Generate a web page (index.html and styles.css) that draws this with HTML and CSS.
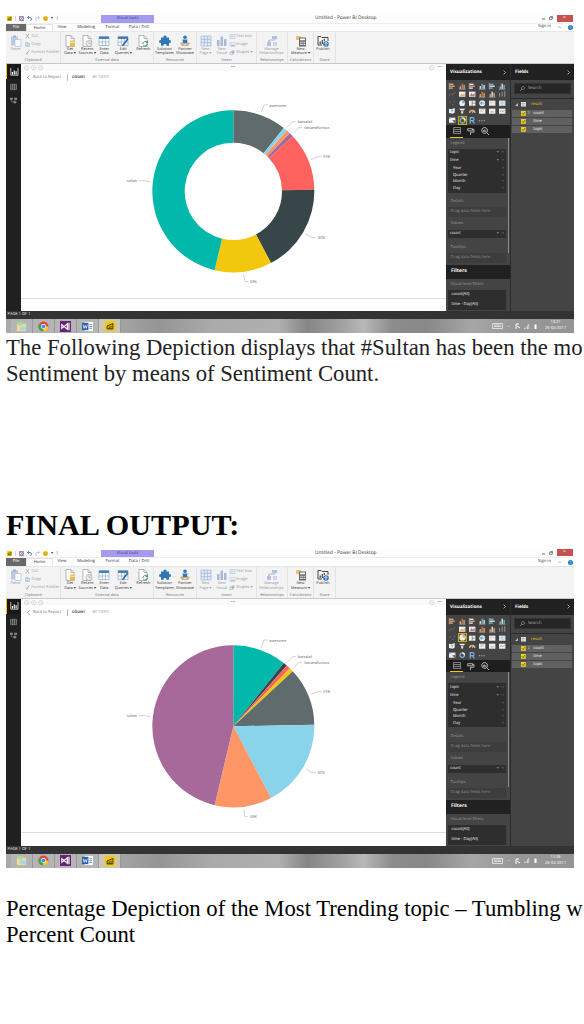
FILE: index.html
```html
<!DOCTYPE html>
<html lang="en">
<head>
<meta charset="utf-8">
<title>Sentiment report</title>
<link rel="stylesheet" href="styles.css">
</head>
<body>
<main class="doc">
  <section class="window" data-chart="donut" data-clock="13:21"></section>
  <p class="para para-first">The Following Depiction displays that #Sultan has been the mo<br>Sentiment by means of Sentiment Count.</p>
  <h1 class="heading">FINAL OUTPUT:</h1>
  <section class="window" data-chart="pie" data-clock="11:26"></section>
  <p class="para para-last">Percentage Depiction of the Most Trending topic – Tumbling w<br>Percent Count</p>
</main>
<script src="app.js"></script>
</body>
</html>
```
FILE: styles.css
```css
* { box-sizing: border-box; }
body { margin: 0; background: #fff; width: 584px; height: 1024px; overflow: hidden; }
.doc { padding: 14px 0 0 6px; width: 584px; height: 1024px; overflow: hidden; }
svg { display: block; flex: none; overflow: visible; }

.para { margin: 0; font: 22.7px/26.4px "Liberation Serif", serif; white-space: nowrap; color: #000; }
.para-first { margin-top: 1.5px; height: 52.8px; color: #222; }
.heading { margin: 117px 0 0; height: 44.7px; font: bold 30.2px/42px "Liberation Serif", serif; white-space: nowrap; color: #000; }
.para-last { margin-top: 28px; }

.window { width: 568px; height: 319px; display: flex; flex-direction: column; font: 4.1px/5px "Open Sans", sans-serif; color: #444; text-rendering: geometricPrecision; overflow: hidden; white-space: nowrap; }

.titlebar { height: 8.5px; display: grid; grid-template-columns: 95px 53px 161px 1fr auto; align-items: center; background: #fdfdfd; flex: none; }
.quick { display: flex; gap: 3px; align-items: center; padding-left: 1px; }
.tools { background: #a49bee; height: 7.5px; margin-top: 1px; line-height: 7px; text-align: center; color: #3d3880; }
.title { grid-column: 4; font-size: 4.8px; color: #333; }
.winbtns { display: flex; align-items: center; gap: 4.5px; height: 8px; align-self: start; }
.close { width: 16px; height: 7px; background: #c75050; color: #fff; text-align: center; font-size: 5px; line-height: 6px; margin-right: 1.5px; margin-left: -1px; }

.tabs { height: 8.5px; display: flex; align-items: stretch; flex: none; line-height: 8.5px; color: #333; background: #fff; border-top: .5px solid #eee; }
.tab { text-align: center; }
.tab-file { width: 20px; background: #686868; color: #fff; }
.tab-home { width: 27px; border: 1px solid #e4e4e4; border-bottom: 0; line-height: 7px; }
.tab-view { width: 18px; }
.tab-model { width: 30px; }
.tab-format { width: 23px; }
.tab-drill { width: 30px; }
.account { margin-left: auto; display: flex; gap: 7px; align-items: center; padding-right: 1px; font-size: 4.2px; }

.ribbon { height: 33px; background: #f3f3f3; border-top: 1px solid #e6e6e6; border-bottom: 1px solid #c9c9c9; display: flex; flex: none; }
.group { display: flex; flex-direction: column; border-right: 1px solid #e4e4e4; flex: none; }
.group-items { display: flex; height: 26px; padding-top: 2.5px; }
.group-name { text-align: center; font-size: 3.8px; color: #777; }
.cmd { display: flex; flex-direction: column; align-items: center; text-align: center; font-size: 3.9px; line-height: 4.7px; color: #333; flex: none; }
.cmd svg { margin-bottom: 1px; }
.cmd span { white-space: pre; }
.off { color: #999; }
.off svg { opacity: .65; }
.stack { display: flex; flex-direction: column; gap: 3px; font-size: 4px; color: #999; }
.stack div { display: flex; gap: 1.5px; align-items: center; height: 4.8px; }
.stack svg { opacity: .65; }

.work { display: flex; height: 247px; flex: none; }
.rail { width: 15px; background: #202020; display: flex; flex-direction: column; align-items: center; gap: 7px; }
.rail-on { width: 15px; height: 15px; border-left: 1px solid #f2c80f; display: grid; place-items: center; background: #181818; margin-bottom: -2px; }
.canvas { width: 425px; background: #fff; display: flex; flex-direction: column; }
.strip { height: 6.5px; display: flex; align-items: center; background: #fafafa; padding-left: 3px; gap: 1.5px; color: #888; flex: none; }
.strip-dots { margin-left: 186px; }
.strip-end { margin-left: auto; margin-right: 4px; display: flex; gap: 3px; align-items: center; }
.back { height: 14.5px; display: flex; align-items: center; padding-left: 6px; color: #777; flex: none; }
.back svg { margin-right: 3px; }
.back b { border-left: 1px solid #bbb; padding: 1px 7px 1px 4.5px; margin-left: 5.5px; color: #444; font-size: 3.7px; }
.back i { font-style: normal; font-size: 4px; color: #999; }
.chart { margin: 10px 0 0 99px; }
.chart text { font-size: 11.5px; fill: #666; }
.page-end { margin-top: 2.5px; border-top: 1px solid #ddd; }

.pane { background: #444; color: #ddd; display: flex; flex-direction: column; }
.viz { width: 65px; border-right: 1px solid #2c2c2c; position: relative; }
.fields { width: 63px; }
.pane-head { height: 16px; background: #212121; color: #fff; font-weight: bold; font-size: 4.6px; line-height: 16px; padding: 0 4px; display: flex; justify-content: space-between; align-items: center; flex: none; }
.gallery { height: 45px; display: grid; grid-template-columns: repeat(6, 10px); grid-auto-rows: 8.6px; place-items: center; padding: 1.5px 0 0 1.5px; flex: none; }
.pick { outline: 1px solid #c8ab18; background: #5a5424; }
.modes { height: 12.5px; background: #1e1e1e; display: flex; align-items: center; gap: 6px; padding-left: 4px; flex: none; }
.modes div { height: 12.5px; width: 8.5px; display: grid; place-items: center; }
.modes .mode-on { width: 13px; border-bottom: 1.5px solid #f2c80f; margin-right: -3px; }
.label { height: 11px; line-height: 11px; padding-left: 4.5px; color: #999; flex: none; }
.well { margin: 0 4px 0 2px; background: #2e2e2e; color: #f2f2f2; flex: none; font-size: 4px; }
.well div { display: flex; justify-content: space-between; padding: 0 2px 0 2px; height: 6.75px; line-height: 6.75px; }
.well .well-top { height: 8.4px; line-height: 8.4px; }
.well .sub { padding-left: 5px; }
.well em { font-style: normal; color: #888; word-spacing: 2px; }
.well-main { height: 44px; padding-top: .5px; margin-bottom: 3.7px; }
.label-values { margin-top: 1px; }
.label-tips { margin-top: 4.5px; }
.well-one { margin-top: 1px; }
.drag { margin: 0 4px 0 2px; height: 9.4px; line-height: 9.4px; padding-left: 2.5px; background: #3d3d3d; color: #8c8c8c; flex: none; }
.filters { height: 13.5px; line-height: 13.5px; background: #212121; color: #fff; font-weight: bold; font-size: 5px; padding-left: 5px; flex: none; margin-top: 2.3px; }
.filter { margin: 0 4px .5px 2px; height: 9.9px; line-height: 9.9px; padding-left: 3.5px; background: #2e2e2e; color: #f2f2f2; flex: none; font-size: 4.1px; }
.scroll { position: absolute; right: 1px; top: 73.5px; width: 1.5px; height: 115px; background: #8a8a8a; }
.search { margin: 3px 3px 4px; height: 11px; border: .5px solid #333; background: #262626; color: #aaa; display: flex; align-items: center; gap: 3px; padding-left: 5px; font-size: 4.3px; flex: none; }
.source { border-top: 1px solid #2c2c2c; height: 12px; display: flex; align-items: center; gap: 3px; padding-left: 4px; color: #f2c80f; flex: none; }
.source u { text-decoration: none; margin-left: 2px; }
.field { margin: 0 2px 1px 1px; height: 7px; background: #606060; color: #fff; display: flex; align-items: center; padding-left: 9px; flex: none; font-size: 4px; }
.field u { text-decoration: none; width: 7.5px; padding-left: 2px; color: #bbb; }

.status { height: 8px; background: #333; color: #eee; font-size: 4px; line-height: 8px; padding-left: 1.5px; flex: none; }
.taskbar { height: 14px; display: flex; align-items: center; flex: none; background: linear-gradient(90deg, #aaa 0, #a4a4a4 20%, #959595 27%, #aaa 36%, #b0b0b0 48%, #868686 53%, #a0a0a0 59%, #b8b8b8 63%, #8c8c8c 68%, #888 74%, #a6a6a6 82%, #979797 90%, #949494 100%); color: #fff; }
.app { width: 22px; height: 14px; border-right: 1px solid #999; display: grid; place-items: center; background: #b4b4b4; }
.app:first-child { margin-left: 5px; }
.app-on { background: #cbc7b4; }
.tray { margin-left: auto; display: flex; gap: 4.5px; align-items: center; }
.clock { width: 27px; text-align: center; font-size: 4px; line-height: 5.8px; margin: 0 5px 0 1px; }
```
FILE: app.js
```js
const svg = (w, h, box, body) => `<svg width="${w}" height="${h}" viewBox="0 0 ${box}">${body}</svg>`;
const rect = (x, y, w, h, fill) => `<rect x="${x}" y="${y}" width="${w}" height="${h}" fill="${fill}"/>`;
const line = (d, stroke, width = 1) => `<path d="${d}" fill="none" stroke="${stroke}" stroke-width="${width}"/>`;
const solid = (d, fill) => `<path d="${d}" fill="${fill}"/>`;
const disc = (x, y, r, fill) => `<circle cx="${x}" cy="${y}" r="${r}" fill="${fill}"/>`;

/* Ribbon icons, 12 x 12 grid */
const sheet = solid('M2 .5h5l3 3v8H2z', '#fff') + line('M2 .5h5l3 3v8H2zM7 .5v3h3', '#999', .7);
const table = rect(1, 1.5, 10, 9, '#fff') + rect(1, 1.5, 10, 2.4, '#3e76ad') + line('M1 1.5h10v9H1zM4.3 4v6.5M7.6 4v6.5M1 7h10', '#7d9fc0', .6);
const ribbonIcons = {
  paste: rect(1, 1.5, 7, 9, '#9db6d8') + rect(3, .5, 3, 2, '#7890b0') + rect(5, 4.5, 6, 7, '#fff') + line('M5 4.5h6v7H5z', '#8faad0', .7),
  get: sheet + rect(6, 5.5, 5, 6, '#edbb52') + line('M6 7.3h5', '#fff', .6),
  recent: sheet + disc(8, 8.5, 3, '#eee') + line('M8 6.5v2h2M5 8.5a3 3 0 1 0 6 0a3 3 0 1 0-6 0', '#999', .6),
  enter: table,
  edit: table + line('M10.8 4L5.5 10.8', '#2b67a8', 1.6),
  refresh: sheet + line('M5.8 9a2.5 2.5 0 0 1 4.5-1.5M10.6 8.6a2.5 2.5 0 0 1-4.4 1.4M10.6 5.6v2H8.8', '#3b9a6d', 1),
  solution: solid('M2 2.5h2.7a1.4 1.4 0 1 1 2.6 0H10v2.7a1.4 1.4 0 1 1 0 2.6v3H7.3a1.4 1.4 0 1 0-2.6 0H2v-3a1.4 1.4 0 1 1 0-2.6z', '#2f78b7'),
  partner: disc(6, 2.3, 1.8, '#2f78b7') + solid('M3.5 4.5h5l-.7 4H4.2z', '#2f78b7') + solid('M1 8l3-1v2l2 1 2-1V7l3 1-2 3H3z', '#d6ad70'),
  page: rect(1, 1, 10, 10, '#dce6f4') + line('M1 1h10v10H1zM1 4.3h10M1 7.6h10M4.3 1v10M7.6 1v10', '#7f9ccc', .8),
  visual: rect(1, 5, 2.5, 6, '#7f9ccc') + rect(4.5, 1.5, 2.5, 9.5, '#7f9ccc') + rect(8, 4, 2.5, 7, '#7f9ccc'),
  manage: line('M3 8V5h6V2M3 5v3', '#7f9ccc') + rect(1, 7, 4, 4, '#90a9d5') + rect(7, 7, 4, 4, '#b7c7e5') + rect(6, 1, 5, 3, '#90a9d5'),
  measure: rect(1, 1, 5, 4, '#f0bd82') + rect(4, 2.5, 7, 9, '#666') + rect(5, 3.5, 5, 1.8, '#fff') + line('M5.2 7.2h5M5.2 9.4h5', '#fff', 1.1) + line('M7 6v5M8.7 6v5', '#666', .6),
  publish: line('M1 10V1.5h3l1 1h6V6M1 10h4', '#333', .9) + line('M3.2 9V6.5M5.3 9V5M7.3 6V4', '#333', 1.1) + disc(9, 9, 2.8, '#2f78b7') + line('M9 11V7.5M7.5 9L9 7.4 10.5 9', '#fff', .7)
};
const cmd = (icon, text, width, off) =>
  `<div class="cmd ${off ? 'off' : ''}" style="width:${width}px">${svg(12, 12, '12 12', ribbonIcons[icon])}<span>${text}</span></div>`;
const mini = body => svg(5, 5, '10 10', body);
const stack = rows => `<div class="stack">${rows.map(r => `<div>${mini(r[0])}${r[1]}</div>`).join('')}</div>`;
const group = (name, width, items) =>
  `<div class="group" style="width:${width}px"><div class="group-items">${items}</div><div class="group-name">${name}</div></div>`;

const ribbon = [
  group('Clipboard', 55, cmd('paste', 'Paste', 19, true) + stack([
    [line('M2 0l5 7M8 0L3 7M1 8h2M7 8h2', '#667', 1.3), 'Cut'],
    [line('M1 1h5v7H1zM4 3h5v6H4z', '#58a', 1), 'Copy'],
    [line('M9 1L5 5', '#888', 2) + solid('M1 6l4-2 2 2-3 4z', '#9ab'), 'Format Painter']])),
  group('External data', 93, cmd('get', 'Get\nData ▾', 18) + cmd('recent', 'Recent\nSources ▾', 16.5) + cmd('enter', 'Enter\nData', 17.5) + cmd('edit', 'Edit\nQueries ▾', 20.5) + cmd('refresh', 'Refresh', 19.5)),
  group('Resources', 43, cmd('solution', 'Solution\nTemplates', 21) + cmd('partner', 'Partner\nShowcase', 20)),
  group('Insert', 60, cmd('page', 'New\nPage ▾', 17, true) + cmd('visual', 'New\nVisual', 15.5, true) + stack([
    [line('M0 1h10v8H0zM2 4h6M2 6h4', '#69b', 1), 'Text box'],
    [line('M0 1h10v8H0z', '#89b', 1) + solid('M1 8l3-4 2 2 2-1 1 3z', '#8ac'), 'Image'],
    [disc(6, 4, 3.5, '#8ab') + line('M0 4h6v5H0z', '#57a', 1), 'Shapes ▾']])),
  group('Relationships', 31, cmd('manage', 'Manage\nRelationships', 29, true)),
  group('Calculations', 26, cmd('measure', 'New\nMeasure ▾', 25)),
  group('Share', 22, cmd('publish', 'Publish', 18))
].join('');

/* Visualization gallery, 10 x 10 grid */
const O = '#e8a878', B = '#73b5d8', W = '#eee', G = '#999';
const bars = (a, b) => rect(1, 1, 6, 2, a) + rect(1, 4, 8, 2, b) + rect(1, 7, 5, 2, a) + line('M.5 0v10', W, .8);
const cols = (a, b) => rect(1, 5, 2, 4, a) + rect(4, 1, 2, 8, b) + rect(7, 3, 2, 6, a) + line('M0 9.6h10', W, .8);
const card = rect(0, 1, 10, 8, W);
const gallery = donutPicked => [
  bars(O, O), cols(O, '#d87c4c'), bars(W, O), cols(W, B), bars(B, W), cols(B, W),
  line('M0 8l3-4 3 2 4-5', '#777'), rect(0, 1, 10, 8, W) + solid('M1 8l3-4 2 2 3-3v5z', O), card + solid('M1 8l3-5 2 3 3-3v5z', '#b77'), cols(O, '#d87c4c'), cols(O, W), line('M1 9V3M5 9V1M9 9V0', G, 1.5),
  disc(2, 3, 1, '#777') + disc(6, 7, 1, '#777') + disc(8, 2, 1, '#777'),
  disc(5, 5, 4.5, W) + solid('M5 5V.5A4.5 4.5 0 0 1 9.5 5z', donutPicked ? B : O),
  card + line('M5 1v8M5 5h5', '#666'), disc(5, 5, 4.6, W) + solid('M2 3l3-1 1 3-2 3-2-2zM7 3l2 2-2 2z', '#69aac8'), card + line('M0 4h10M3 1v8', '#bbb', .7), card + line('M0 3.5h10M0 6h10M5 1v8', B, .7),
  solid('M0 1l4 1 5-2v7L6 9 0 8z', W) + solid('M3 3l4 0-2 4z', B), solid('M0 1h10L7 4H3zM3 5h4L6 9H4z', W), line('M1 8a4 4 0 0 1 8 0', O, 2.2) + line('M5 8L7 4', W), card + line('M2 3h6M2 5h4', G, .8), card + line('M2 6h6', G), card + line('M1 6l3-2 2 2 3-3', '#a77'),
  card + solid('M5 5h5v5z', '#555') + rect(0, 1, 3, 2, B), line('M5 1.5a3.5 3.5 0 1 0 .1 0', B, 2) + line('M5 1.5a3.5 3.5 0 0 1 3.5 3.5', W, 2),
  line('M2 10V1h3.5a2.3 2.3 0 0 1 0 4.8H2M5.5 6L8.5 10', '#79aee6', 1.9), disc(1, 6, .8, W) + disc(4.5, 6, .8, W) + disc(8, 6, .8, W)
].map((body, i) => {
  const picked = i === (donutPicked ? 25 : 13);
  return picked ? `<div class="pick">${svg(7, 7, '10 10', body)}</div>` : svg(6.4, 6.4, '10 10', body);
}).join('');

/* Chart: slice ends in degrees, clockwise from the top */
const ends = [38.5, 41.3, 44.3, 47.2, 88.8, 152.3, 193.4, 360];
const palettes = {
  donut: ['#5f6b6d', '#8ad4eb', '#fe9666', '#a66999', '#fd625e', '#374649', '#f2c80f', '#01b8aa'],
  pie: ['#01b8aa', '#374649', '#fd625e', '#f2c80f', '#5f6b6d', '#8ad4eb', '#fe9666', '#a66999']
};
const labels = [
  ['awesome', 448, 36, 50, 'M424 52l8-22h12'], ['batsalail', 533, 84, 44, 'M500 98l18-18h10'],
  ['fastandfurious', 553, 103, 75, 'M520 115l16-17h10'], ['FF8', 610, 190, 20, 'M573 194l20-9h12'],
  ['MTB', 593, 432, 21, 'M557 417l19 11h12'], ['SRK', 390, 565, 21, 'M371 539l4 21h10'], ['sultan', 20, 262, 31, 'M92 261l-15-4H56']
];
const point = (deg, r) => {
  const a = deg * Math.PI / 180;
  return `${(340 + r * Math.sin(a)).toFixed(1)} ${(289 - r * Math.cos(a)).toFixed(1)}`;
};
function chart(kind) {
  let from = 0;
  const slices = ends.map((to, i) => {
    const big = to - from > 180 ? 1 : 0;
    const stop = Math.min(to, 359.99);
    const inner = kind === 'donut' ? `L${point(stop, 146)}A146 146 0 ${big} 0 ${point(from, 146)}z` : 'L340 289z';
    const d = `M${point(from, 243)}A243 243 0 ${big} 1 ${point(stop, 243)}${inner}`;
    from = to;
    return solid(d, palettes[kind][i]);
  }).join('');
  const notes = labels.map(([t, x, y, w, d]) => line(d, '#bbb', 2) + `<text x="${x}" y="${y}" textLength="${w}" lengthAdjust="spacingAndGlyphs">${t}</text>`).join('');
  return `<svg class="chart" width="220" height="200" viewBox="0 0 660 600">${slices}${notes}</svg>`;
}

const chevron = svg(3, 5, '3 5', line('M.5.5l2 2-2 2', '#ccc', .7));
const check = svg(4.8, 4.8, '8 8', rect(0, 0, 8, 8, '#f0d21b') + line('M1.5 4l2 2 3-4', '#333', 1.2));
const ring = svg(5.4, 5.4, '10 10', line('M5 .8a4.2 4.2 0 1 0 .1 0M3 5h4', '#bbb', 1));
const pbi = size => svg(size, size, '12 12', rect(0, 0, 12, 12, '#f2c80f') + line('M2.5 8V6l7-3v6.5h-7zM5 9.5V6.5M7.2 9.5V5.5', '#332b00', 1.1));

const apps = [
  rect(1, 3, 10, 8, '#f1df8a') + rect(2, 1, 5, 4, '#a9d99b') + rect(4, 6, 7, 4, '#a8d4e8'),
  disc(6, 6, 5.5, '#e04a3b') + solid('M6 6L1.2 3.2A5.5 5.5 0 0 0 5.5 11.5z', '#3aa757') + solid('M6 6h5.4A5.5 5.5 0 0 1 5.5 11.5z', '#f7c928') + disc(6, 6, 2.7, '#fff') + disc(6, 6, 2, '#4285f4'),
  rect(0, 0, 12, 12, '#68217a') + line('M2 4l6 5V3L2 8z', '#fff', 1.3) + line('M9.8 2v8', '#fff', 1.3),
  rect(3, 1, 9, 10, '#fff') + rect(0, 2, 7, 8, '#2b5fa8') + line('M1.3 4l1 4 1.2-3 1.2 3 1-4', '#fff', .8) + line('M8 4h3M8 6h3M8 8h3', '#4b7cc0', .9)
];

function windowMarkup(kind, clock) {
  return `
  <div class="titlebar">
    <div class="quick">${pbi(5)}${svg(1, 5, '1 5', line('M.5 0v5', '#aaa', .5))}
      ${svg(5, 5, '10 10', line('M1 1h8v8H1zM3 1v3h4V1M3 9V6h4v3', '#65538c', 1.2))}
      ${svg(5, 5, '10 10', line('M1 3h5a3 3 0 0 1 0 6M4 0L1 3l3 3', '#3568a8', 1.5))}
      ${svg(5, 5, '10 10', line('M9 3H4a3 3 0 0 0 0 6M6 0l3 3-3 3', '#9db6d8', 1.3))}
      ${svg(5, 5, '10 10', disc(5, 5, 5, '#f0bd1c') + line('M3 6q2 2 4 0M3 3.5h1M6 3.5h1', '#765700', 1))}<span>▾</span><span>|</span></div>
    <div class="tools">Visual tools</div>
    <div class="title">Untitled - Power BI Desktop</div>
    <div class="winbtns">${svg(3, 4, '3 4', line('M0 3h3', '#444', .8))}${svg(4, 4, '4 4', line('M.5 1.3h2.5v2.3H.5zM1.2.5h2.4v2.2', '#444', .6))}<div class="close">×</div></div>
  </div>
  <div class="tabs">
    <div class="tab tab-file">File</div><div class="tab tab-home">Home</div><div class="tab tab-view">View</div>
    <div class="tab tab-model">Modeling</div><div class="tab tab-format">Format</div><div class="tab tab-drill">Data / Drill</div>
    <div class="account"><span>Sign in</span>${svg(3, 3, '3 3', line('M.2 2L1.5.7 2.8 2', '#777', .6))}${svg(5, 5, '10 10', disc(5, 5, 5, '#1c7fc7') + line('M3.5 3.8q1.5-2 3 0q0 1-1.5 1.7M5 7v1', '#fff', 1))}</div>
  </div>
  <div class="ribbon">${ribbon}</div>
  <div class="work">
    <div class="rail"><div class="rail-on">${svg(8, 8, '10 10', line('M1 0v9h9V0', '#fff', .9) + line('M3 8V5M5.3 8V3M7.6 8V4', '#fff', 1.4))}</div>
      ${svg(7, 6, '10 9', line('M.5.5h9v8h-9zM.5 3h9M.5 6h9M3.5 0v9M6.5 0v9', '#999', .9))}
      ${svg(7, 7, '10 10', line('M2 3v4h5V3', '#777', 1) + rect(0, 1, 4, 3, '#888') + rect(6, 1, 4, 3, '#888') + rect(5, 6, 4, 3, '#888'))}</div>
    <div class="canvas">
      <div class="strip">${ring}${ring}${ring}<span class="strip-dots"> ••• </span><div class="strip-end">${ring}<span>•••</span></div></div>
      <div class="back">${svg(3, 5, '3 5', line('M2.6.3L.5 2.5l2.1 2.2', '#777', .7))}Back to Report<b>COUNT</b><i>BY TOPIC</i></div>
      ${chart(kind)}
      <div class="page-end"></div>
    </div>
    <div class="pane viz">
      <div class="pane-head">Visualizations${chevron}</div>
      <div class="gallery">${gallery(kind === 'donut')}</div>
      <div class="modes">
        <div class="mode-on">${svg(8, 7, '8 7', line('M.5.5h7v2h-7zM.5 2.5v4h7v-4M.5 4.5h7', '#aaa', .7))}</div>
        <div>${svg(7, 7, '10 10', line('M1 1h7v3H1zM8 2h2v4H5v4', '#bbb', 1.3))}</div>
        <div>${svg(8, 8, '10 10', line('M4.5.7a3.6 3.6 0 1 0 .1 0M7 7l3 3M3 6V4M4.6 6V3M6 6V4', '#ccc', 1.1))}</div>
      </div>
      <div class="label">Legend</div>
      <div class="well well-main">
        <div class="well-top">topic<em>▾ ×</em></div><div class="well-top">time<em>▾ ×</em></div>
        <div class="sub">Year<em>×</em></div><div class="sub">Quarter<em>×</em></div><div class="sub">Month<em>×</em></div><div class="sub">Day<em>×</em></div>
      </div>
      <div class="label">Details</div><div class="drag">Drag data fields here</div>
      <div class="label label-values">Values</div><div class="well well-one"><div class="well-top">count<em>▾ ×</em></div></div>
      <div class="label label-tips">Tooltips</div><div class="drag">Drag data fields here</div>
      <div class="filters">Filters</div>
      <div class="label">Visual level filters</div>
      <div class="filter">count(All)</div><div class="filter">time - Day(All)</div>
      <div class="scroll"></div>
    </div>
    <div class="pane fields">
      <div class="pane-head">Fields${chevron}</div>
      <div class="search">${svg(5, 5, '10 10', line('M6 1a3 3 0 1 0 .1 0M4 6L0 10', '#aaa', 1.2))}Search</div>
      <div class="source">${svg(3, 3, '3 3', solid('M3 0v3H0z', '#bbb'))}${svg(5, 4.5, '10 9', rect(0, 0, 10, 9, '#eee') + line('M0 3h10M0 6h10M4 0v9', '#888', .8))}<u>result</u></div>
      <div class="field">${check}<u>Σ</u>count</div><div class="field">${check}<u></u>time</div><div class="field">${check}<u></u>topic</div>
    </div>
  </div>
  <div class="status">PAGE 1 OF 1</div>
  <div class="taskbar">
    ${apps.map(a => `<div class="app">${svg(11, 11, '12 12', a)}</div>`).join('')}<div class="app app-on">${pbi(10)}</div>
    <div class="tray">${svg(11, 6, '11 6', line('M.5.5h10v5H.5zM2 2h7M2 3.5h7', '#eee', .8))}${svg(3, 3, '3 3', line('M.3 2L1.5.8 2.7 2', '#ddd', .6))}
      ${svg(5, 6, '5 6', line('M1 6V1h3M2 3l3 2', '#fff', 1))}${svg(5, 5, '5 5', line('M.5 5V4M2 5V3M3.5 5V1.5M4.7 5V0', '#eee', .7))}${svg(3, 5, '3 5', rect(.5, .5, 2, 4.5, '#fff'))}
      <div class="clock">${clock}<br>26-04-2017</div></div>
  </div>`;
}

document.querySelectorAll('.window').forEach(el => {
  el.innerHTML = windowMarkup(el.dataset.chart, el.dataset.clock);
});
```
